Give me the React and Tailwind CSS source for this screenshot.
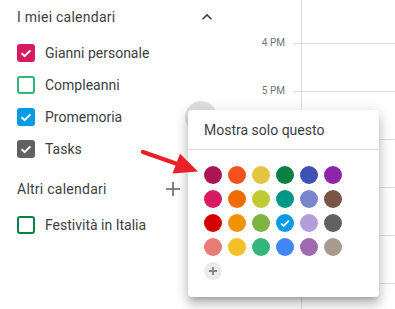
import React from 'react'

const myCalendars = [
  { name: 'Gianni personale', color: '#d81b60', checked: true },
  { name: 'Compleanni', color: '#33b679', checked: false },
  { name: 'Promemoria', color: '#039be5', checked: true },
  { name: 'Tasks', color: '#616161', checked: true },
]

const palette = [
  ['#ad1457', '#f4511e', '#e4c441', '#0b8043', '#3f51b5', '#8e24aa'],
  ['#d81b60', '#ef6c00', '#c0ca33', '#009688', '#7986cb', '#795548'],
  ['#d50000', '#f09300', '#7cb342', '#039be5', '#b39ddb', '#616161'],
  ['#e67c73', '#f6bf26', '#33b679', '#4285f4', '#9e69af', '#a79b8e'],
]

// only the labels not hidden by the popup
const hours = ['4 PM', '5 PM']
const gridRows = [0, 1, 2, 3, 4, 5]

const Checkbox = ({ color, checked }) => (
  <div
    className="w-[18px] h-[18px] rounded-[3px] shrink-0 flex items-center justify-center"
    style={checked ? { background: color } : { border: `2px solid ${color}` }}
  >
    {checked && (
      <svg width="18" height="18" viewBox="0 0 18 18">
        <path d="M4.6 9.2l3 3L13.4 6.4" fill="none" stroke="#fff" strokeWidth="2" />
      </svg>
    )}
  </div>
)

const CalendarRow = ({ name, color, checked }) => (
  <div className="h-[32px] flex items-center pl-[17px]">
    <Checkbox color={color} checked={checked} />
    <span className="ml-[10px] text-[14px] leading-[20px]">{name}</span>
  </div>
)

const GridRows = () => (
  <div className="flex flex-col pt-[43px]">
    {gridRows.map((r) => (
      <div key={r} className="h-[48px] border-t border-[#dadce0] shrink-0" />
    ))}
  </div>
)

export default function App() {
  return (
    <div className="relative w-[395px] h-[309px] overflow-hidden bg-white flex font-['Roboto',sans-serif] text-[#3c4043]">
      <aside className="w-[229px] shrink-0">
        <div className="h-[34px] flex items-center justify-between pl-[17px] pr-[12px]">
          <span className="text-[14px] leading-[20px] tracking-[0.25px]">I miei calendari</span>
          <svg width="20" height="20" viewBox="0 0 24 24" fill="#3c4043">
            <path d="M12 8l-6 6 1.41 1.41L12 10.83l4.59 4.58L18 14z" />
          </svg>
        </div>
        <div className="mt-[3px]">
          {myCalendars.map((c) => (
            <CalendarRow key={c.name} {...c} />
          ))}
        </div>
        <div className="mt-[8px] h-[32px] flex items-center justify-between pl-[17px] pr-[44px]">
          <span className="text-[14px] leading-[20px] tracking-[0.25px]">Altri calendari</span>
          <svg width="24" height="24" viewBox="0 0 24 24" fill="#5f6368">
            <path d="M19 12.8h-6.2V19h-1.6v-6.2H5v-1.6h6.2V5h1.6v6.2H19z" />
          </svg>
        </div>
        <div className="mt-[4px]">
          <CalendarRow name="Festività in Italia" color="#0b8043" checked={false} />
        </div>
      </aside>

      <div className="w-[64px] shrink-0 pt-[37px] pr-[8px] text-right text-[10px] leading-[12px] text-[#70757a]">
        {hours.map((h) => (
          <div key={h} className="h-[48px]">{h}</div>
        ))}
      </div>
      <div className="w-[8px] shrink-0">
        <GridRows />
      </div>
      <div className="flex-1 border-l border-[#dadce0]">
        <GridRows />
      </div>

      <div className="absolute left-[185px] top-[101px] w-[32px] h-[32px] rounded-full bg-[#e0e0e0]" />

      <div className="absolute left-[188px] top-[110px] w-[191px] h-[187px] bg-white rounded-[4px] shadow-[0_8px_10px_1px_rgba(0,0,0,0.14),0_3px_14px_2px_rgba(0,0,0,0.12),0_5px_5px_-3px_rgba(0,0,0,0.2)]">
        <div className="h-[40px] flex items-center pl-[16px] border-b border-[#dadce0] text-[14px] leading-[20px]">
          Mostra solo questo
        </div>
        <div className="pt-[16px] pl-[16px] flex flex-col gap-[6px]">
          {palette.map((row, i) => (
            <div key={i} className="flex gap-[6px]">
              {row.map((c) => (
                <div
                  key={c}
                  className="w-[18px] h-[18px] rounded-full flex items-center justify-center"
                  style={{ background: c }}
                >
                  {c === '#039be5' && (
                    <svg width="18" height="18" viewBox="0 0 18 18">
                      <path d="M5 9.3l2.6 2.6L13 6.6" fill="none" stroke="#fff" strokeWidth="1.8" />
                    </svg>
                  )}
                </div>
              ))}
            </div>
          ))}
          <div className="w-[18px] h-[18px] rounded-full bg-[#e8eaed] flex items-center justify-center">
            <svg width="10" height="10" viewBox="0 0 10 10">
              <path d="M5 1v8M1 5h8" stroke="#80868b" strokeWidth="1.8" />
            </svg>
          </div>
        </div>
      </div>

      <svg className="absolute inset-0 pointer-events-none" width="395" height="309" viewBox="0 0 395 309">
        <line x1="143" y1="152" x2="178" y2="164.3" stroke="#e8202a" strokeWidth="4.2" strokeLinecap="round" />
        <polygon points="198,171.5 172.5,173.5 180,153.8" fill="#e8202a" />
      </svg>
    </div>
  )
}
